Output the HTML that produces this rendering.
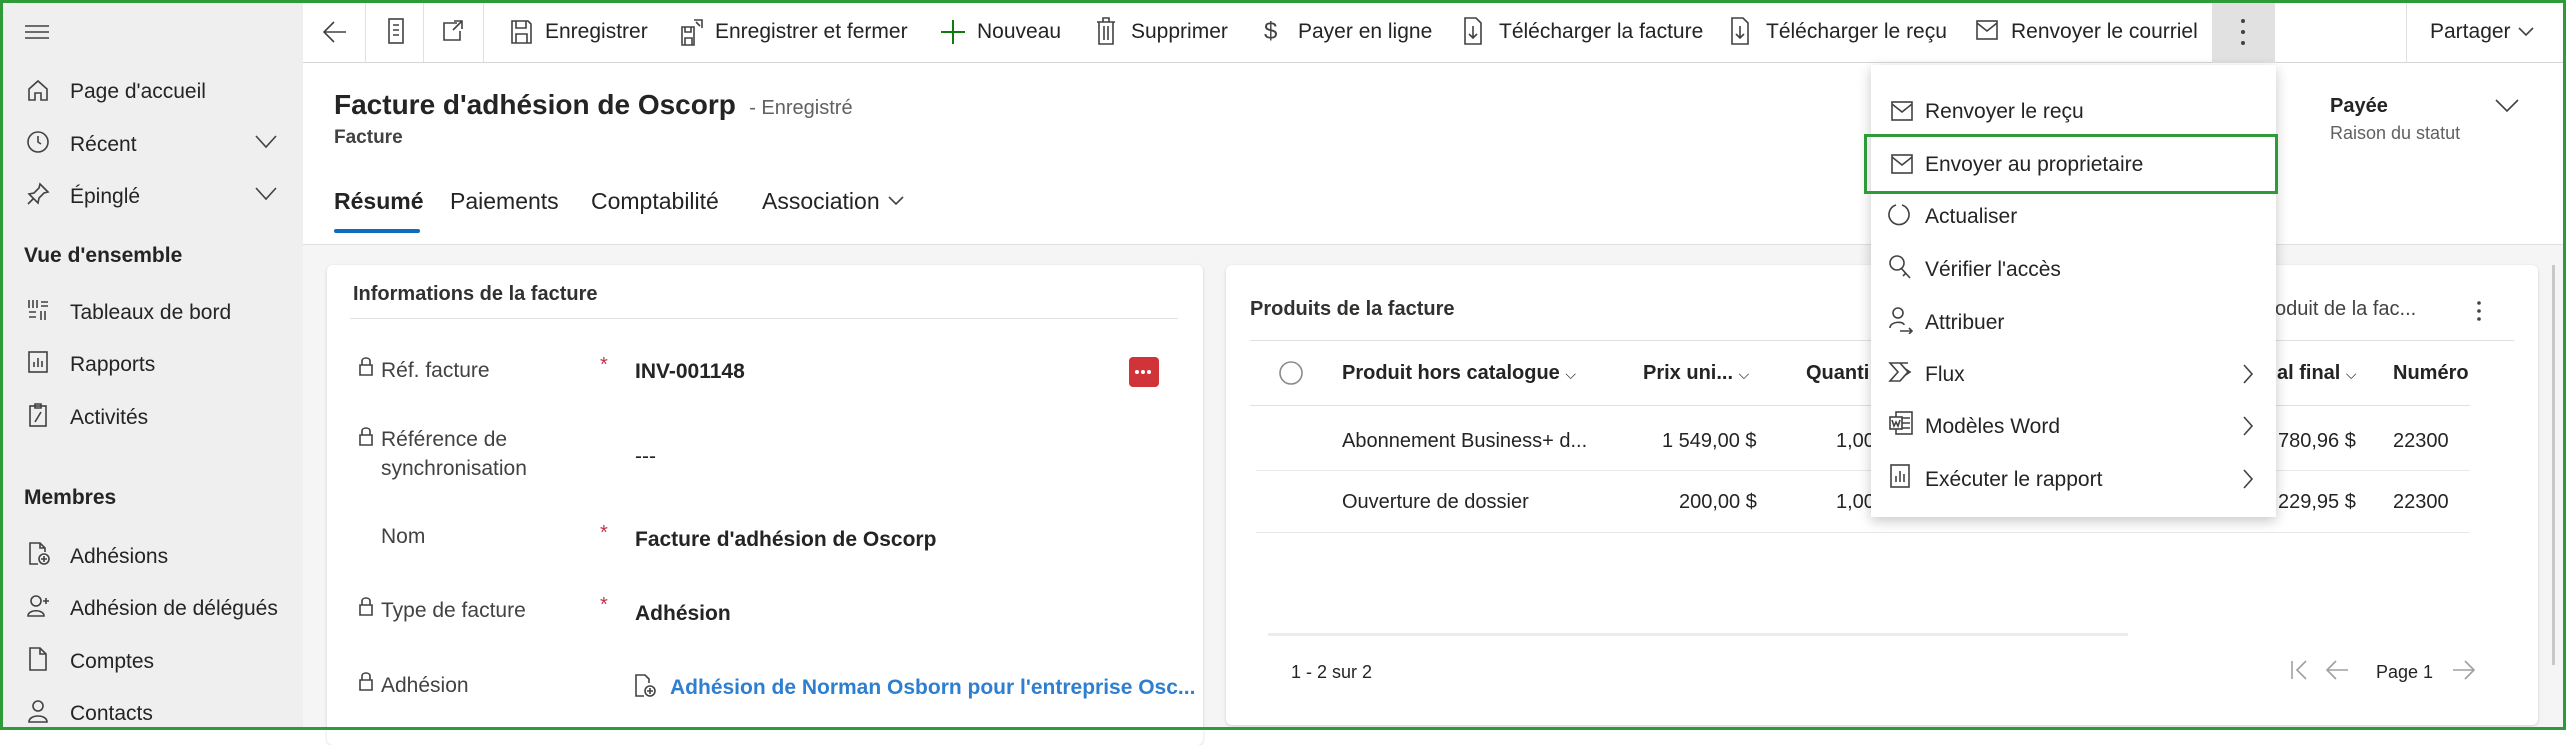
<!DOCTYPE html>
<html><head><meta charset="utf-8"><style>
*{margin:0;padding:0;box-sizing:border-box}
body{width:2566px;height:730px;overflow:hidden;font-family:"Liberation Sans",sans-serif;color:#242424;background:#fff;position:relative}
.a{position:absolute;white-space:nowrap}
.f21{font-size:21px;margin-top:2px}
svg{position:absolute;fill:none;stroke:#424242;stroke-width:1.6}
.side{position:absolute;left:0;top:0;width:303px;height:730px;background:#efefef}
.top{position:absolute;left:303px;top:0;right:0;height:63px;border-bottom:1px solid #d6d6d6;background:#fff}
.hdr{position:absolute;left:303px;top:63px;right:0;height:182px;background:#fff;border-bottom:1px solid #e0e0e0}
.bodybg{position:absolute;left:303px;top:245px;right:0;bottom:0;background:#f5f5f5}
.card{position:absolute;background:#fff;border-radius:6px;box-shadow:0 1px 3px rgba(0,0,0,.15)}
.menu{position:absolute;left:1871px;top:65px;width:405px;height:452px;background:#fff;box-shadow:0 4px 12px rgba(0,0,0,.22)}
.lbl{color:#424242;font-size:21px;margin-top:2px}
.req{color:#c4314b;font-size:20px}
.val{font-size:21px;font-weight:bold;color:#242424;margin-top:2px}
</style></head><body>
<div class="side"></div>
<!-- sidebar -->
<svg style="left:24px;top:24px" width="26" height="16"><path d="M1 2H25M1 8H25M1 14H25"/></svg>
<svg style="left:26px;top:78px" width="24" height="24"><path d="M3 11L12 3L21 11V22H15V15H9V22H3Z"/></svg><div class="a f21" style="left:70px;top:78px">Page d'accueil</div>
<svg style="left:26px;top:130px" width="24" height="24"><circle cx="12" cy="12" r="10"/><path d="M12 6V12L15 14"/></svg><div class="a f21" style="left:70px;top:131px">Récent</div>
<svg style="left:255px;top:135px" width="22" height="14"><path d="M1 1L11 12L21 1"/></svg>
<svg style="left:26px;top:182px" width="24" height="24"><path d="M14 2L22 10L18 11L13 16L12 21L3 12L8 11L13 6ZM8 16L2 22"/></svg><div class="a f21" style="left:70px;top:183px">Épinglé</div>
<svg style="left:255px;top:187px" width="22" height="14"><path d="M1 1L11 12L21 1"/></svg>
<div class="a" style="left:24px;top:244px;font-size:21px;font-weight:bold">Vue d'ensemble</div>
<svg style="left:26px;top:298px" width="24" height="24"><path d="M3 2V10M7 2V10M11 2V10M15 4H22M15 8H22M3 14H10M3 19H10M15 13V22M19 13V22"/></svg><div class="a f21" style="left:70px;top:299px">Tableaux de bord</div>
<svg style="left:26px;top:350px" width="24" height="24"><rect x="3" y="2" width="18" height="20"/><path d="M8 17V12M12 17V8M16 17V11"/></svg><div class="a f21" style="left:70px;top:351px">Rapports</div>
<svg style="left:26px;top:402px" width="24" height="26"><rect x="4" y="4" width="16" height="20"/><path d="M9 2H15V6H9ZM9 20L15 10"/></svg><div class="a f21" style="left:70px;top:404px">Activités</div>
<div class="a" style="left:24px;top:486px;font-size:21px;font-weight:bold">Membres</div>
<svg style="left:26px;top:541px" width="26" height="26"><path d="M12 23H4V2H14L19 7V11M14 2V7H19"/><circle cx="18" cy="18" r="5"/><path d="M18 15V21M15 18H21"/></svg><div class="a f21" style="left:70px;top:543px">Adhésions</div>
<svg style="left:26px;top:593px" width="26" height="26"><circle cx="10" cy="8" r="5"/><path d="M2 23C2 16 18 16 18 23ZM20 5V11M17 8H23"/></svg><div class="a f21" style="left:70px;top:595px">Adhésion de délégués</div>
<svg style="left:26px;top:646px" width="24" height="26"><path d="M4 2H14L20 8V24H4ZM14 2V8H20"/></svg><div class="a f21" style="left:70px;top:648px">Comptes</div>
<svg style="left:26px;top:698px" width="24" height="26"><circle cx="12" cy="8" r="5"/><path d="M3 24C3 16 21 16 21 24Z"/></svg><div class="a f21" style="left:70px;top:700px">Contacts</div>

<div class="top"></div>
<div class="a" style="left:365px;top:0;width:1px;height:62px;background:#e0e0e0"></div>
<div class="a" style="left:423px;top:0;width:1px;height:62px;background:#e0e0e0"></div>
<div class="a" style="left:483px;top:0;width:1px;height:62px;background:#e0e0e0"></div>
<svg style="left:322px;top:19px" width="26" height="26"><path d="M24 13H3M12 3L2 13L12 23"/></svg>
<svg style="left:386px;top:17px" width="20" height="28"><rect x="3" y="2" width="14" height="24"/><path d="M7 8H13M7 13H13M7 18H13"/></svg>
<svg style="left:440px;top:19px" width="26" height="24"><path d="M17 4H4V21H20V12M14 2H22V10M22 2L13 11"/></svg>
<svg style="left:510px;top:19px" width="22" height="26"><path d="M2 2H18L21 5V24H2ZM6 2V9H16V2M6 24V15H17V24"/></svg><div class="a f21" style="left:545px;top:18px">Enregistrer</div>
<svg style="left:680px;top:17px" width="26" height="30"><path d="M2 10H14V28H2ZM5 10V15H11V10M5 28V21H12V28M14 3H22V11M16 5L20 9"/></svg><div class="a f21" style="left:715px;top:18px">Enregistrer et fermer</div>
<svg style="left:940px;top:19px;stroke:#107c10;stroke-width:2" width="26" height="26"><path d="M13 1V25M1 13H25"/></svg><div class="a f21" style="left:977px;top:18px">Nouveau</div>
<svg style="left:1095px;top:16px" width="22" height="30"><path d="M2 6H20M8 6V2H14V6M4 6V28H18V6M9 10V24M13 10V24"/></svg><div class="a f21" style="left:1131px;top:18px">Supprimer</div>
<div class="a" style="left:1264px;top:18px;font-size:24px;color:#424242">$</div><div class="a f21" style="left:1298px;top:18px">Payer en ligne</div>
<svg style="left:1463px;top:16px" width="20" height="30"><path d="M2 2H13L18 7V28H2ZM10 10V22M6 18L10 22L14 18"/></svg><div class="a f21" style="left:1499px;top:18px">Télécharger la facture</div>
<svg style="left:1730px;top:16px" width="20" height="30"><path d="M2 2H13L18 7V28H2ZM10 10V22M6 18L10 22L14 18"/></svg><div class="a f21" style="left:1766px;top:18px">Télécharger le reçu</div>
<svg style="left:1975px;top:19px" width="24" height="22"><rect x="2" y="2" width="20" height="18"/><path d="M2 4L12 12L22 4"/></svg><div class="a f21" style="left:2011px;top:18px">Renvoyer le courriel</div>
<div class="a" style="left:2212px;top:3px;width:63px;height:60px;background:#e1e1e1"></div>
<svg style="left:2240px;top:18px;fill:#424242;stroke:none" width="6" height="28"><circle cx="3" cy="3" r="2"/><circle cx="3" cy="14" r="2"/><circle cx="3" cy="25" r="2"/></svg>
<div class="a" style="left:2406px;top:0;width:1px;height:62px;background:#e0e0e0"></div>
<div class="a f21" style="left:2430px;top:18px">Partager</div>
<svg style="left:2518px;top:26px" width="16" height="12"><path d="M1 2L8 9L15 2"/></svg>

<div class="hdr"></div>
<div class="a" style="left:334px;top:89px;font-size:28px;font-weight:bold">Facture d'adhésion de Oscorp <span style="font-size:20px;font-weight:normal;color:#616161">&nbsp;- Enregistré</span></div>
<div class="a" style="left:334px;top:127px;font-size:19px;font-weight:bold;color:#424242">Facture</div>
<div class="a" style="left:334px;top:188px;font-size:23px;font-weight:bold">Résumé</div>
<div class="a" style="left:334px;top:229px;width:86px;height:4px;background:#0f6cbd;border-radius:2px"></div>
<div class="a" style="left:450px;top:188px;font-size:23px">Paiements</div>
<div class="a" style="left:591px;top:188px;font-size:23px">Comptabilité</div>
<div class="a" style="left:762px;top:188px;font-size:23px">Association</div>
<svg style="left:888px;top:195px" width="16" height="12"><path d="M1 2L8 9L15 2"/></svg>
<div class="a" style="left:2330px;top:95px;font-size:20px;font-weight:bold">Payée</div>
<div class="a" style="left:2330px;top:123px;font-size:18px;color:#616161">Raison du statut</div>
<svg style="left:2495px;top:98px" width="24" height="16"><path d="M1 2L12 13L23 2"/></svg>

<div class="bodybg"></div>
<div class="card" style="left:327px;top:265px;width:876px;height:480px"></div>
<div class="a" style="left:353px;top:283px;font-size:20px;font-weight:bold;color:#323130">Informations de la facture</div>
<div class="a" style="left:350px;top:318px;width:828px;height:1px;background:#e1e1e1"></div>
<svg style="left:359px;top:356px" width="14" height="20"><path d="M3 9V5C3 1 11 1 11 5V9M1 9H13V19H1Z"/></svg><div class="a lbl" style="left:381px;top:357px">Réf. facture</div><div class="a req" style="left:600px;top:354px">*</div><div class="a val" style="left:635px;top:358px">INV-001148</div>
<div class="a" style="left:1129px;top:357px;width:30px;height:30px;background:#d13438;border-radius:4px"></div>
<svg style="left:1134px;top:369px;fill:#fff;stroke:none" width="20" height="6"><circle cx="3" cy="3" r="2"/><circle cx="9" cy="3" r="2"/><circle cx="15" cy="3" r="2"/></svg>
<svg style="left:359px;top:426px" width="14" height="20"><path d="M3 9V5C3 1 11 1 11 5V9M1 9H13V19H1Z"/></svg><div class="a lbl" style="left:381px;top:426px">Référence de</div><div class="a lbl" style="left:381px;top:455px">synchronisation</div><div class="a val" style="left:635px;top:443px;font-weight:normal">---</div>
<div class="a lbl" style="left:381px;top:523px">Nom</div><div class="a req" style="left:600px;top:522px">*</div><div class="a val" style="left:635px;top:526px">Facture d'adhésion de Oscorp</div>
<svg style="left:359px;top:596px" width="14" height="20"><path d="M3 9V5C3 1 11 1 11 5V9M1 9H13V19H1Z"/></svg><div class="a lbl" style="left:381px;top:597px">Type de facture</div><div class="a req" style="left:600px;top:594px">*</div><div class="a val" style="left:635px;top:600px">Adhésion</div>
<svg style="left:359px;top:671px" width="14" height="20"><path d="M3 9V5C3 1 11 1 11 5V9M1 9H13V19H1Z"/></svg><div class="a lbl" style="left:381px;top:672px">Adhésion</div>
<svg style="left:633px;top:673px" width="24" height="26"><path d="M11 23H3V2H12L16 6V10"/><circle cx="17" cy="18" r="5"/><path d="M17 15V21M14 18H20"/></svg>
<div class="a" style="left:670px;top:676px;font-size:21px;font-weight:bold;color:#2f7fd0">Adhésion de Norman Osborn pour l'entreprise Osc...</div>

<div class="card" style="left:1226px;top:265px;width:1312px;height:460px"></div>
<div class="a" style="left:1250px;top:298px;font-size:20px;font-weight:bold;color:#323130">Produits de la facture</div>
<div class="a" style="left:2275px;top:298px;font-size:20px;color:#424242">oduit de la fac...</div>
<svg style="left:2476px;top:300px;fill:#424242;stroke:none" width="6" height="22"><circle cx="3" cy="3" r="1.8"/><circle cx="3" cy="11" r="1.8"/><circle cx="3" cy="19" r="1.8"/></svg>
<div class="a" style="left:1250px;top:340px;width:1264px;height:1px;background:#e1e1e1"></div>
<svg style="left:1278px;top:360px" width="26" height="26"><circle cx="13" cy="13" r="11" stroke="#8a8a8a"/></svg>
<div class="a" style="left:1342px;top:362px;font-size:20px;font-weight:bold">Produit hors catalogue <span style="font-size:14px;font-weight:normal">⌵</span></div>
<div class="a" style="left:1643px;top:362px;font-size:20px;font-weight:bold">Prix uni... <span style="font-size:14px;font-weight:normal">⌵</span></div>
<div class="a" style="left:1806px;top:362px;font-size:20px;font-weight:bold">Quanti</div>
<div class="a" style="left:2277px;top:362px;font-size:20px;font-weight:bold">al final <span style="font-size:14px;font-weight:normal">⌵</span></div>
<div class="a" style="left:2393px;top:362px;font-size:20px;font-weight:bold">Numéro</div>
<div class="a" style="left:1250px;top:405px;width:1220px;height:1px;background:#e1e1e1"></div>
<div class="a" style="left:1342px;top:430px;font-size:20px">Abonnement Business+ d...</div>
<div class="a" style="left:1662px;top:430px;font-size:20px">1 549,00 $</div>
<div class="a" style="left:1836px;top:430px;font-size:20px">1,00</div>
<div class="a" style="left:2278px;top:430px;font-size:20px">780,96 $</div>
<div class="a" style="left:2393px;top:430px;font-size:20px">22300</div>
<div class="a" style="left:1256px;top:470px;width:1214px;height:1px;background:#e8e8e8"></div>
<div class="a" style="left:1342px;top:491px;font-size:20px">Ouverture de dossier</div>
<div class="a" style="left:1679px;top:491px;font-size:20px">200,00 $</div>
<div class="a" style="left:1836px;top:491px;font-size:20px">1,00</div>
<div class="a" style="left:2278px;top:491px;font-size:20px">229,95 $</div>
<div class="a" style="left:2393px;top:491px;font-size:20px">22300</div>
<div class="a" style="left:1256px;top:532px;width:1214px;height:1px;background:#e8e8e8"></div>
<div class="a" style="left:1268px;top:633px;width:860px;height:3px;background:#ececec"></div>
<div class="a" style="left:1291px;top:662px;font-size:18px">1 - 2 sur 2</div>
<svg style="left:2290px;top:659px;stroke:#a0a0a0" width="20" height="22"><path d="M2 2V20M16 2L7 11L16 20"/></svg>
<svg style="left:2325px;top:659px;stroke:#a0a0a0" width="24" height="22"><path d="M23 11H3M11 2L2 11L11 20"/></svg>
<div class="a" style="left:2376px;top:662px;font-size:18px">Page 1</div>
<svg style="left:2452px;top:659px;stroke:#a0a0a0" width="24" height="22"><path d="M1 11H21M13 2L22 11L13 20"/></svg>
<div class="a" style="left:2552px;top:265px;width:3px;height:400px;background:#c8c8c8"></div>

<div class="menu"></div>
<svg style="left:1890px;top:100px" width="24" height="22"><rect x="2" y="2" width="20" height="18"/><path d="M2 4L12 12L22 4"/></svg><div class="a f21" style="left:1925px;top:98px">Renvoyer le reçu</div>
<div class="a" style="left:1864px;top:134px;width:414px;height:60px;border:3px solid #2e9a3a"></div>
<svg style="left:1890px;top:153px" width="24" height="22"><rect x="2" y="2" width="20" height="18"/><path d="M2 4L12 12L22 4"/></svg><div class="a f21" style="left:1925px;top:151px">Envoyer au proprietaire</div>
<svg style="left:1888px;top:202px" width="24" height="26"><path d="M8 3A10 10 0 1 0 14 3"/></svg><div class="a f21" style="left:1925px;top:203px">Actualiser</div>
<svg style="left:1888px;top:254px" width="26" height="28"><circle cx="9" cy="9" r="7"/><path d="M13 14L22 24M18 19L15 22"/></svg><div class="a f21" style="left:1925px;top:256px">Vérifier l'accès</div>
<svg style="left:1888px;top:306px" width="26" height="28"><circle cx="10" cy="7" r="5"/><path d="M2 22C2 15 16 15 16 19M12 25H24M21 22L24 25L21 28" /></svg><div class="a f21" style="left:1925px;top:309px">Attribuer</div>
<svg style="left:1888px;top:360px" width="26" height="24"><path d="M2 3H12L20 12L12 21H2L10 12Z M12 3L20 3M16 8L22 12L16 16"/></svg><div class="a f21" style="left:1925px;top:361px">Flux</div>
<svg style="left:2242px;top:363px" width="12" height="22"><path d="M2 2L10 11L2 20"/></svg>
<svg style="left:1888px;top:410px" width="26" height="26"><rect x="8" y="2" width="16" height="22"/><rect x="2" y="7" width="12" height="12" fill="#fff"/><path d="M14 8H22M14 13H22M14 18H22M4 10L6 16L8 12L10 16L12 10"/></svg><div class="a f21" style="left:1925px;top:413px">Modèles Word</div>
<svg style="left:2242px;top:415px" width="12" height="22"><path d="M2 2L10 11L2 20"/></svg>
<svg style="left:1888px;top:463px" width="24" height="26"><rect x="3" y="2" width="18" height="22"/><path d="M8 19V13M12 19V8M16 19V11"/></svg><div class="a f21" style="left:1925px;top:466px">Exécuter le rapport</div>
<svg style="left:2242px;top:468px" width="12" height="22"><path d="M2 2L10 11L2 20"/></svg>

<div class="a" style="left:0;top:0;width:2566px;height:730px;border:3px solid #2e9a3a"></div>
</body></html>
